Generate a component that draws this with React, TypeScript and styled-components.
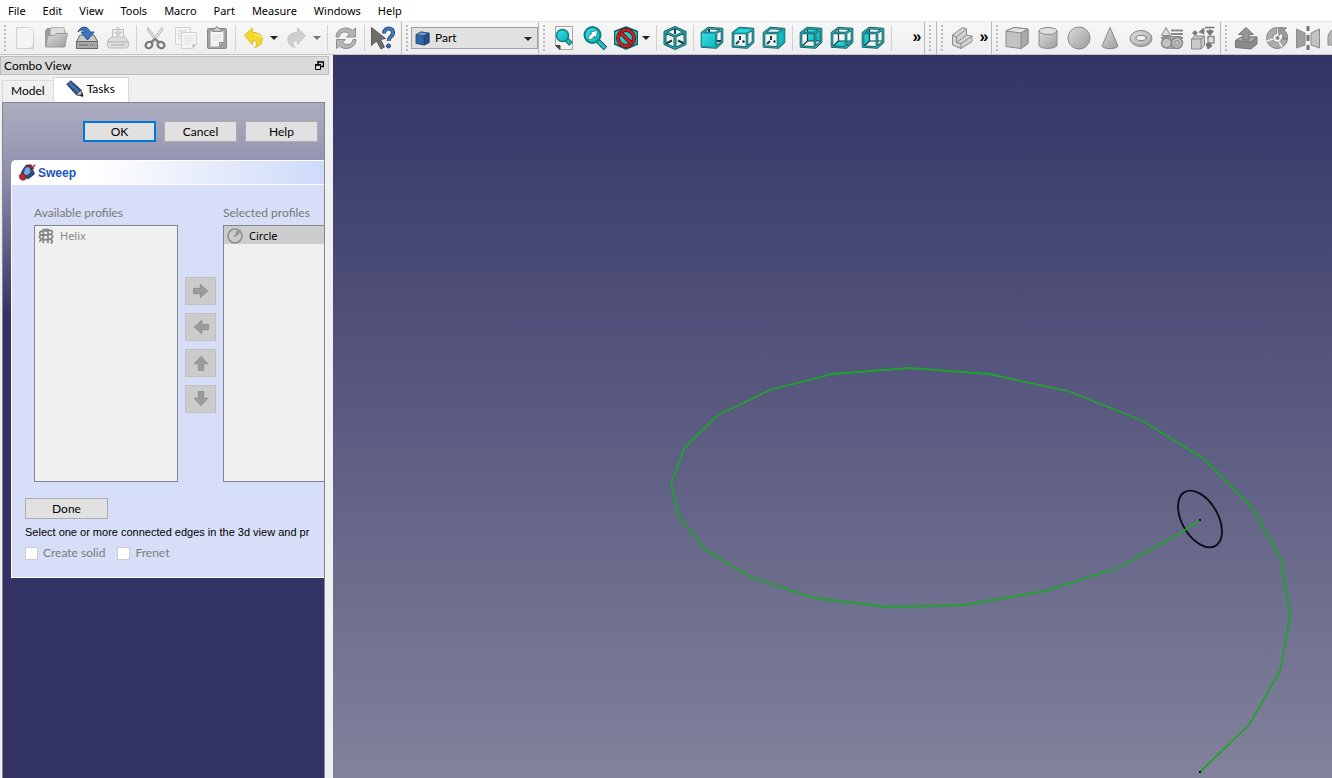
import React from "react";
import styled, { createGlobalStyle, css } from "styled-components";

const Global = createGlobalStyle`
  * { box-sizing: border-box; }
  body { margin: 0; background: #f0f0f0; font: 12px/16px Lato, sans-serif; color: #000; }
  button, select, input { font: inherit; color: inherit; margin: 0; }
`;

const Page = styled.div`
  display: flex;
  flex-direction: column;
  height: 100vh;
  overflow: hidden;
`;

const MenuBar = styled.nav`
  display: flex;
  flex: none;
  gap: 1px;
  height: 21px;
  background: #fff;
`;

const MenuItem = styled.button`
  border: 0;
  padding: 0 8px;
  background: none;
  font-family: "Noto Sans", sans-serif;
  font-size: 11px;
  line-height: 21px;
  white-space: nowrap;
`;

const ToolRow = styled.div`
  display: flex;
  flex: none;
  height: 34px;
  overflow: hidden;
  background: #f0f0f0;
  border-top: 1px solid #e4e4e4;
  border-bottom: 1px solid #c4c4c4;
`;

const ToolGroup = styled.div<{ $end?: number }>`
  display: flex;
  flex: none;
  align-items: center;
  padding-right: ${(p) => p.$end ?? 3}px;
  border-right: 1px solid #b8b8b8;
  background: linear-gradient(#f7f7f7, #eeeeee);
`;

const Handle = styled.span`
  flex: none;
  width: 2px;
  height: 26px;
  margin: 0 3px 0 4px;
  background: repeating-linear-gradient(#bdbdbd 0 2px, transparent 2px 4px);
`;

const ToolButton = styled.button<{ $menu?: boolean }>`
  display: flex;
  flex: none;
  align-items: center;
  gap: 4px;
  width: ${(p) => (p.$menu ? 43 : 31)}px;
  height: 30px;
  padding: 0 0 0 4px;
  border: 0;
  background: none;
`;

const ToolSep = styled.span`
  flex: none;
  width: 1px;
  height: 26px;
  margin: 0 2px 0 3px;
  background: #d0d0d0;
`;

const MoreButton = styled.button`
  flex: none;
  width: 14px;
  padding: 0 0 2px;
  border: 0;
  background: none;
  font: bold 16px/20px "Liberation Sans", sans-serif;
`;

const Spacer = styled.span`
  flex: none;
  width: 16px;
`;

const Combo = styled.label`
  position: relative;
  display: block;
  width: 127px;
  & > svg { position: absolute; top: 4px; pointer-events: none; }
  & > svg:first-child { left: 4px; }
  & > svg:last-child { top: 10px; right: 6px; }
`;

const ComboSelect = styled.select`
  appearance: none;
  display: block;
  width: 100%;
  height: 22px;
  padding: 0 20px 0 23px;
  border: 1px solid #a0a0a0;
  border-radius: 0;
  background: #e1e1e1;
`;

const Main = styled.div`
  display: flex;
  flex: 1;
  min-height: 0;
`;

const Dock = styled.aside`
  display: flex;
  flex: none;
  flex-direction: column;
  width: 333px;
  padding-top: 1px;
`;

const DockTitle = styled.header`
  display: flex;
  align-items: center;
  justify-content: space-between;
  height: 19px;
  width: 329px;
  padding: 0 4px 0 3px;
  border: 1px solid #bcbcbc;
  background: #dadada;
`;

const FloatButton = styled.button`
  display: flex;
  padding: 0;
  border: 0;
  background: none;
`;

const Tabs = styled.div`
  display: flex;
  align-items: flex-end;
  height: 27px;
  padding: 2px 0 0 2px;
`;

const Tab = styled.button<{ $active?: boolean }>`
  display: flex;
  align-items: center;
  gap: 3px;
  border: 1px solid #d9d9d9;
  border-bottom: 0;
  ${(p) =>
    p.$active
      ? css`height: 25px; padding: 0 13px 2px 12px; background: #fff;`
      : css`height: 22px; padding: 0 8px 2px; background: #f0f0f0; border-right: 0;`}
`;

const TaskPanel = styled.section`
  flex: 1;
  min-height: 0;
  margin: 0 8px 0 2px;
  overflow: hidden;
  border: 1px solid #828790;
  border-bottom: 0;
  background: linear-gradient(#acacc0 0, #9292b0 66px, #333366 210px);
`;

const DialogButtons = styled.div`
  display: flex;
  justify-content: flex-end;
  gap: 8px;
  padding: 18px 6px;
`;

const PushButton = styled.button<{ $primary?: boolean; $wide?: boolean }>`
  width: ${(p) => (p.$wide ? 83 : 73)}px;
  height: 21px;
  padding: 0;
  border: ${(p) => (p.$primary ? "2px solid #0078d7" : "1px solid #adadad")};
  background: #e1e1e1;
  line-height: 16px;
`;

const TaskBox = styled.div`
  margin-left: 8px;
  border: 1px solid #fff;
  border-right: 0;
  border-radius: 5px 0 0 0;
  overflow: hidden;
  background: #d6dff7;
`;

const TaskHeader = styled.h2`
  display: flex;
  align-items: center;
  gap: 2px;
  height: 24px;
  margin: 0;
  padding-left: 7px;
  border-bottom: 1px solid #fff;
  background: linear-gradient(90deg, #fff 25%, #cfdaf9);
  color: #1c55b8;
  font-family: "Liberation Sans", sans-serif;
  font-size: 12px;
`;

const Profiles = styled.div`
  display: grid;
  grid-template-columns: 144px 31px 144px;
  gap: 4px 7px;
  padding: 20px 0 16px 22px;
`;

const ProfileLabel = styled.span`
  color: #787878;
  white-space: nowrap;
  &:nth-child(2) { grid-column: 3; }
`;

const ProfileList = styled.ul`
  height: 257px;
  margin: 0;
  padding: 0;
  border: 1px solid #828790;
  background: #f0f0f0;
  list-style: none;
`;

const ProfileItem = styled.li<{ $selected?: boolean }>`
  display: flex;
  align-items: center;
  gap: 6px;
  height: 18px;
  padding: 2px 3px 0;
  background: ${(p) => (p.$selected ? "#cdcdcd" : "none")};
  color: ${(p) => (p.$selected ? "#000" : "#8a8a8a")};
  font-family: "Noto Sans", sans-serif;
  font-size: 11px;
`;

const MoveButtons = styled.div`
  display: flex;
  flex-direction: column;
  gap: 8px;
  padding-top: 52px;
`;

const MoveButton = styled.button`
  display: flex;
  align-items: center;
  justify-content: center;
  height: 28px;
  padding: 0;
  border: 1px solid #bfbfbf;
  background: #cccccc;
`;

const TaskFooter = styled.div`
  display: flex;
  flex-direction: column;
  align-items: flex-start;
  gap: 5px;
  padding: 0 0 16px 13px;
  white-space: nowrap;
`;

const Hint = styled.span`
  font-family: "Liberation Sans", sans-serif;
  font-size: 11px;
`;

const Checks = styled.div`
  display: flex;
  gap: 12px;
`;

const CheckLabel = styled.label`
  display: flex;
  align-items: center;
  gap: 5px;
  color: #7c7c7c;
`;

const CheckBox = styled.input`
  appearance: none;
  width: 13px;
  height: 13px;
  border: 1px solid #ccc;
  background: #fff;
`;

const View3D = styled.main`
  flex: 1;
  min-width: 0;
  background: linear-gradient(#333366, #82829c);
  & > svg { display: block; width: 100%; height: 100%; }
`;

type IconProps = { children: React.ReactNode; size?: number; stroke?: string };
const Icon = ({ children, size = 24, stroke = "#8a8a8a" }: IconProps) => (
  <svg width={size} height={size} viewBox="0 0 24 24" fill="none" stroke={stroke} strokeWidth="1" strokeLinejoin="round" aria-hidden="true">
    {children}
  </svg>
);

const Caret = ({ color = "#222" }: { color?: string }) => (
  <svg width="8" height="4" viewBox="0 0 8 4" aria-hidden="true">
    <path d="M0 0h8L4 4z" fill={color} />
  </svg>
);

const GradientDefs = styled.svg`
  display: block;
`;

const Defs = () => (
  <GradientDefs width="0" height="0" aria-hidden="true">
    <defs>
      <linearGradient id="grey" x1="0" y1="0" x2="1" y2="1">
        <stop offset="0" stopColor="#dcdcdc" />
        <stop offset="1" stopColor="#9c9c9c" />
      </linearGradient>
      <linearGradient id="teal" x1="0" y1="0" x2="1" y2="1">
        <stop offset="0" stopColor="#35e0e2" />
        <stop offset="1" stopColor="#0fb4bc" />
      </linearGradient>
    </defs>
  </GradientDefs>
);

const NewIcon = () => (
  <Icon stroke="#cfcfcf">
    <path d="M3.500 1.500h17v21h-17z" fill="#f4f4f4" />
    <path d="M20.500 16.500v6h-6c4 0 6-2 6-6z" fill="#e4e4e4" />
    <path d="M14 1.500h6.500V7c-1-3-3-5-6.500-5.500z" fill="#fff" stroke="#e2e2e2" />
  </Icon>
);
const OpenIcon = () => (
  <Icon stroke="#9a9a9a">
    <path d="M1.500 20.500V4.500L3 2.500h6l1 2h11v16z" fill="#9b9b9b" />
    <path d="M7 1.500h13l1 8H6z" fill="#dedede" stroke="#b5b5b5" />
    <path d="M1.500 21L4 9.500h6l2-2h11.500l-3 13.500z" fill="url(#grey)" />
  </Icon>
);
const SaveIcon = () => (
  <Icon stroke="#696969">
    <path d="M1.500 15.500L5 9h14l3.500 6.500v7h-21z" fill="#c9c9c9" />
    <path d="M1.500 15.500h21v7h-21z" fill="#a9a9a9" />
    <path d="M4 19h9M15 19h1m1 0h1m1 0h1" stroke="#666" />
    <path d="M3 6C5 0 13-1 15 6h4l-6.500 8L6 6h4C9 4 6 3 3 6z" fill="#3f78bd" stroke="#24508c" />
  </Icon>
);
const PrintIcon = () => (
  <Icon stroke="#bbbbbb">
    <path d="M6.500 3.500h11v9h-11z" fill="#f6f6f6" />
    <path d="M12 1v8M8.500 5.500L12 9.500l3.500-4" strokeWidth="2.500" stroke="#cfcfcf" />
    <path d="M1.500 15.500L5 11h14l3.500 4.500v5l-2 1.500h-17l-2-1.500z" fill="#dedede" />
    <path d="M2 16h20M5 19h14" stroke="#c6c6c6" strokeWidth="2" />
  </Icon>
);
const CutIcon = () => (
  <Icon>
    <path d="M5 1.500L16.500 17l-2 .5L4.500 4z" fill="#e9e9e9" stroke="#b0b0b0" />
    <path d="M19 1.500L7.500 17l2 .5L19.500 4z" fill="#f4f4f4" stroke="#b0b0b0" />
    <ellipse cx="6" cy="19" rx="3.500" ry="3" stroke="#777" strokeWidth="2.200" transform="rotate(-30 6 19)" />
    <ellipse cx="18" cy="19" rx="3.500" ry="3" stroke="#777" strokeWidth="2.200" transform="rotate(30 18 19)" />
    <path d="M8 16l4-3 4 3" stroke="#777" strokeWidth="2" />
  </Icon>
);
const CopyIcon = () => (
  <Icon stroke="#d2d2d2">
    <path d="M1.500 1.500h15v17h-15z" fill="#f4f4f4" />
    <path d="M4 5h9M4 7.500h9M4 10h3M4 12.500h3" />
    <path d="M7.500 6.500h15v12l-4 4h-11z" fill="#f4f4f4" />
    <path d="M10 10h10M10 12.500h10M10 15h10M10 17.500h6" stroke="#dedede" />
    <path d="M18.500 22.500v-4h4z" fill="#bbb" />
  </Icon>
);
const PasteIcon = () => (
  <Icon stroke="#8a8a8a">
    <rect x="2.500" y="2.500" width="19" height="20" rx="1" fill="#a2a2a2" />
    <path d="M5.500 5.500h13v11l-4 4h-9z" fill="#f3f3f3" stroke="#c9c9c9" />
    <path d="M8 9h8M8 11.500h8M8 14h6" stroke="#ddd" />
    <path d="M14.500 20.500v-4h4z" fill="#c0c0c0" />
    <path d="M8 5.500V3h2l1-2h2l1 2h2v2.500z" fill="#d0d0d0" />
  </Icon>
);
const UndoIcon = () => (
  <Icon stroke="#dfbb1e">
    <path d="M2.500 9.500L10.500 2v4.500c7.500 0 10.500 4 9.500 8.500-.6 3.500-3.500 5.500-7 6.500 2.500-3 3.500-6.500-2.500-7v4z" fill="#f4d92c" />
    <path d="M12 8.500c4 0 6.500 1.500 7 4" stroke="#fff39a" />
  </Icon>
);
const RedoIcon = () => (
  <Icon stroke="#c4c4c4">
    <path d="M20.500 9.500L12.500 2v4.500C5 6.500 2 10.500 3 15c.6 3.500 3.500 5.500 7 6.500-2.500-3-3.500-6.500 2.500-7v4z" fill="#cfcfcf" />
  </Icon>
);
const RefreshIcon = () => (
  <Icon stroke="#8f8f8f">
    <path d="M2 11C2 5 7 2 12 2c3 0 5 1 6.500 2.500L21.500 2v9h-9l3-3C12 4.500 6 5.500 5 11z" fill="#b4b4b4" />
    <path d="M22 13.500c0 6-5 9-10 9-3 0-5-1-6.500-2.500L2.500 22.500v-9h9l-3 3c3.500 3.500 9.500 2.500 10.500-3z" fill="#b4b4b4" />
  </Icon>
);
const WhatsThisIcon = () => (
  <Icon>
    <path d="M13 7.500C13 .5 22.500 1 22 7c-.3 3.500-4.500 4-4.500 8" stroke="#23497e" strokeWidth="4" />
    <path d="M13 7.500C13 .5 22.500 1 22 7c-.3 3.500-4.500 4-4.500 8" stroke="#4a80bd" strokeWidth="2" />
    <circle cx="17.500" cy="20" r="2" fill="#3c6eac" stroke="#23497e" />
    <path d="M.5 1.500l14 11-5 1 4 7.500-3.500 2-4.500-8-5 4.500z" fill="#6d6e6a" stroke="#5b5c59" />
  </Icon>
);
const PartIcon = () => (
  <Icon size={15} stroke="#173762">
    <path d="M1.500 6l8-4.500 13 2v15l-8 4-13-2.500z" fill="#3267a8" />
    <path d="M1.500 6l8-4.500 13 2-8 4z" fill="#6d9fd4" />
    <path d="M14.500 7.500l8-4v15l-8 4z" fill="#25508a" />
  </Icon>
);

const FitAllIcon = () => (
  <Icon>
    <path d="M3.500 .5h17v23H8l-4.500-4z" fill="#f4f4f1" stroke="#a9a9a3" />
    <path d="M3.500 19.500L8 23.500v-4z" fill="#444" stroke="#444" />
    <path d="M14 13l5 5" stroke="#0a5b60" strokeWidth="5" />
    <path d="M13 12l5.500 5.500" stroke="#20c4ca" strokeWidth="3" />
    <circle cx="10.500" cy="9.500" r="6" fill="url(#teal)" stroke="#0b7c82" strokeWidth="1.500" />
  </Icon>
);
const FitSelIcon = () => (
  <Icon>
    <path d="M15 15l7.500 7.500" stroke="#0a5b60" strokeWidth="5" />
    <path d="M15 15l7 7" stroke="#20c4ca" strokeWidth="3" />
    <circle cx="9.500" cy="9" r="8" fill="url(#teal)" stroke="#0f7d84" strokeWidth="2" />
    <path d="M4.500 14L6 10l3-2.500-2-1.500 7.500-1.500L13 12l-1.500-2-3 3z" fill="#fff" stroke="#0b5e64" strokeWidth=".6" />
  </Icon>
);
const NoDrawIcon = () => (
  <Icon>
    <path d="M.5 5.500L12 1l11.500 4.500v12.500L12 23 .5 18z" fill="url(#teal)" stroke="#0b5e64" strokeWidth="1.500" />
    <circle cx="12" cy="12" r="8" stroke="#5a0808" strokeWidth="4" />
    <circle cx="12" cy="12" r="8" stroke="#c42424" strokeWidth="2.600" />
    <path d="M6.500 6.500l11 11" stroke="#5a0808" strokeWidth="4" />
    <path d="M6.500 6.500l11 11" stroke="#c42424" strokeWidth="2.600" />
  </Icon>
);
const IsoIcon = () => {
  const d = "M12 1.500l10 4.500v12l-10 4.500L2 18V6zM2 6l10 4.500L22 6M12 10.500v12";
  return (
    <Icon>
      <path d="M12 2v6M2 18l7-3.500M22 18l-7-3.500" stroke="#0b4549" strokeWidth="2" />
      <path d={d} stroke="#0e5a5f" strokeWidth="3" />
      <path d={d} stroke="#2fa9ae" strokeWidth="1.200" />
    </Icon>
  );
};
const faces = {
  front: "M2 7h14v15H2z",
  top: "M2 7l7-5h13l-6 5z",
  right: "M16 7l6-5v14l-6 6z",
  rear: "M8.500 2H22v13H8.500z",
  bottom: "M2 22l6.500-7H22l-6 7z",
  left: "M2 7l6.500-5v13L2 22z",
};
const ViewIcon = ({ face }: { face: keyof typeof faces }) => {
  const back = face === "rear" || face === "bottom" || face === "left";
  const frame = "M2 7h14v14.500L2 20.500zM2 7l6.500-5L22 3v13l-6 5.500M16 7l6-4";
  const hidden = back ? "M8.500 2v13H22M8.500 15L2 21" : face === "front" ? "M9 3v4M16 15h5" : "M9 10v4M5 18l3-3M11.500 15l2 1";
  return (
    <Icon>
      {back && <path d={faces[face]} fill="url(#teal)" stroke="none" />}
      <path d={hidden} stroke="#0b4549" strokeWidth={back ? 1.2 : 2} />
      {!back && <path d={faces[face]} fill="url(#teal)" stroke="none" />}
      <path d={frame} stroke="#0e5a5f" strokeWidth="2.600" />
      <path d={frame} stroke="#2fa9ae" strokeWidth="1.200" />
      {face === "front" && <path d="M1.500 7h14v14.500l-14-1z" fill="url(#teal)" stroke="#139097" />}
      {face === "top" && <path d="M2 7l7-5 13 1-6 4z" fill="#2bd6da" stroke="#139097" />}
      {face === "right" && <path d="M16 7.500l6-4v12.500l-6 5z" fill="#14bac2" stroke="#139097" />}
    </Icon>
  );
};

const StepsIcon = () => (
  <Icon>
    <path d="M2.500 9l10-7.500 4 1.500v6l5.500 1v5.500L11 22.500l-8.500-3.500z" fill="#d2d2d2" />
    <path d="M2.500 9l4 2v5.500l4.500 1v5M6.500 11l10-8M6.500 16.500l10-7.500M11 17.500l11-7.500" />
  </Icon>
);
const BoxIcon = () => (
  <Icon>
    <path d="M1 5l8-3.500 14 1.500v14.500l-7 5L1 20.500z" fill="#c2c2c2" />
    <path d="M1 5l8-3.500L23 3l-7 4z" fill="#e2e2e2" />
    <path d="M16 7l7-4v14.500l-7 5z" fill="#a9a9a9" />
  </Icon>
);
const CylinderIcon = () => (
  <Icon>
    <path d="M3 5v14c0 4.500 18 4.500 18 0V5z" fill="url(#grey)" />
    <ellipse cx="12" cy="5" rx="9" ry="3.500" fill="#dedede" />
  </Icon>
);
const SphereIcon = () => (
  <Icon>
    <circle cx="12" cy="12" r="11" fill="url(#grey)" />
  </Icon>
);
const ConeIcon = () => (
  <Icon>
    <path d="M12 1.500L4 20c1 3.500 15 3.500 16 0z" fill="url(#grey)" />
  </Icon>
);
const TorusIcon = () => (
  <Icon>
    <ellipse cx="12" cy="12.500" rx="11" ry="8" fill="url(#grey)" />
    <ellipse cx="12" cy="12" rx="5" ry="2.500" fill="#f0f0f0" />
    <ellipse cx="12" cy="12" rx="8" ry="5" stroke="#d8d8d8" />
  </Icon>
);
const PrimitivesIcon = () => (
  <Icon>
    <path d="M6 1.500L1.500 9.500h9z" fill="#ddd" />
    <path d="M11 4.500h12M11 8h12M1 12h22" strokeWidth="2" />
    <path d="M3 10.500h18v10c-3 2.500-15 2.500-18 0z" fill="#ababab" />
    <circle cx="6.500" cy="17" r="5" fill="#c2c2c2" strokeWidth="1.500" />
    <circle cx="17" cy="17" r="5.500" fill="#c2c2c2" strokeWidth="1.500" />
    <circle cx="17" cy="17" r="2.500" />
  </Icon>
);
const BuilderIcon = () => (
  <Icon>
    <path d="M.5 13l3-3h10v9l-3.500 4H.5z" fill="#c9c9c9" />
    <path d="M.5 13H10v10M10 13l3.500-3" />
    <path d="M4 4.500L6.500 7 4 9.500 1.500 7zM8 6l5-4v6z" fill="#777" />
    <path d="M14 1.500h9.500M19 3v5M16 5l3 4 3-4z" fill="#777" stroke="#777" strokeWidth="1.500" />
    <path d="M17 10.500h6V17h-6z" fill="#ddd" strokeWidth="1.500" />
    <path d="M15 18l4-1 2 3-4 3z" fill="#777" stroke="#777" />
  </Icon>
);
const ExtrudeIcon = () => (
  <Icon stroke="#777">
    <path d="M1.500 14.500l6-3.500h15.500v7l-6 5-15.500-1.500z" fill="#8a8a8a" />
    <path d="M1.500 14.500l6-3.500h15.500l-6 5z" fill="#ababab" />
    <path d="M9 14V8.500H4.500L12 1.500l7.500 7H15V14z" fill="#979797" />
  </Icon>
);
const RevolveIcon = () => (
  <Icon stroke="#858585">
    <path d="M12 1.500a10.500 10.500 0 1 0 10.500 12l-6-.5a4.500 4.500 0 1 1-5-5.500z" fill="#ababab" />
    <path d="M22.500 13c.5-4-1-7-3.500-9l2.500-2-8-.5.500 8 2-2.500c1.500 1.500 2 3.500 1.500 5.500z" fill="#999" />
    <path d="M2 15l6-2M14 16l3 5" stroke="#eee" strokeWidth="1.500" />
    <circle cx="12.500" cy="12" r="1.500" fill="#888" />
  </Icon>
);
const MirrorIcon = () => (
  <Icon stroke="#8a8a8a">
    <path d="M.5 3l8.500 4v12l-8.500 3z" fill="#a0a0a0" />
    <path d="M23.500 3L15 7v12l8.500 3z" fill="#c2c2c2" />
    <path d="M12 0v5M12 9v6M12 19v5" strokeWidth="3" stroke="#777" />
  </Icon>
);
const FilletIcon = () => (
  <Icon>
    <path d="M1 19V12C1 6 6 2 12 2h11v17z" fill="#b5b5b5" />
    <path d="M7 19v-5c0-4 3-7 8-7h8" />
  </Icon>
);

const PencilIcon = () => (
  <Icon size={18} stroke="#14294a">
    <path d="M1 5.500L6.500 1 20 13l2.500 8.500-9-2z" fill="#30578f" />
    <path d="M4 3.500l13.500 13" stroke="#5479b0" strokeWidth="2" />
    <path d="M13.500 19.500l6.500-6 2.500 8z" fill="#b9bbbd" stroke="#444" />
    <path d="M19 20.500l2.500-2.500 1 3.500z" fill="#222" />
  </Icon>
);
const SweepIcon = () => (
  <Icon size={17} stroke="#4b1116">
    <path d="M3 12l5-8 9-2 5 12-9 7-6-3z" fill="#2c4d85" stroke="#1b3358" />
    <path d="M9 5l6-1 2 8-7 5-4-4z" fill="#7aa7da" stroke="#274a7c" />
    <path d="M1 15l4-2 5 4-1 5-5 1-3-3z" fill="#c9252c" />
    <path d="M9 2l8-1 4 5-3 1-3-4z" fill="#b5252c" />
    <path d="M20 1h3v3h-3z" fill="#d93238" stroke="none" />
  </Icon>
);
const HelixIcon = () => (
  <Icon size={16} stroke="#858585">
    <path d="M10 2h6M15 1v22M8 1v22M15 4c8-2 9 5 1 6M15 10c9-2 9 6 1 7M15 17c7-1 8 4 4 6M15 5C7 2 1 6 3 9c2 2 7 2 12 1M15 11C6 8 0 12 3 15c2 2 7 3 12 2M14 18c-6-2-12-1-11 3" strokeWidth="2.600" />
  </Icon>
);
const CircleIcon = () => (
  <Icon size={16} stroke="#909090">
    <circle cx="12" cy="12" r="10.500" strokeWidth="2.500" />
    <path d="M11 13l5-5" strokeWidth="3" />
    <path d="M13 6l7-3-3 7z" fill="#909090" />
  </Icon>
);
const MoveIcon = ({ angle }: { angle: number }) => (
  <Icon size={18} stroke="#858585">
    <path d="M2 8.500h9V3l10 9-10 9v-5.500H2z" fill="#9c9c9c" transform={`rotate(${angle} 12 12)`} />
  </Icon>
);
const FloatIcon = () => (
  <svg width="9" height="9" viewBox="0 0 9 9" fill="none" stroke="#000" aria-hidden="true">
    <path d="M3 .5V1h5.500v4.500H6M3 0v3M0 4h6" strokeWidth="1.500" />
    <path d="M.5 3.500h5v5h-5z" />
  </svg>
);

const menus = ["File", "Edit", "View", "Tools", "Macro", "Part", "Measure", "Windows", "Help"];

type ToolProps = { label: string; menu?: string; children: React.ReactNode };
const Tool = ({ label, menu, children }: ToolProps) => (
  <ToolButton type="button" title={label} aria-label={label} $menu={!!menu}>
    {children}
    {menu && <Caret color={menu} />}
  </ToolButton>
);

const Toolbars = () => (
  <ToolRow>
    <ToolGroup>
      <Handle />
      <Tool label="New"><NewIcon /></Tool>
      <Tool label="Open"><OpenIcon /></Tool>
      <Tool label="Save"><SaveIcon /></Tool>
      <Tool label="Print"><PrintIcon /></Tool>
      <ToolSep />
      <Tool label="Cut"><CutIcon /></Tool>
      <Tool label="Copy"><CopyIcon /></Tool>
      <Tool label="Paste"><PasteIcon /></Tool>
      <ToolSep />
      <Tool label="Undo" menu="#222"><UndoIcon /></Tool>
      <Tool label="Redo" menu="#777"><RedoIcon /></Tool>
      <ToolSep />
      <Tool label="Refresh"><RefreshIcon /></Tool>
      <ToolSep />
      <Tool label="What's this"><WhatsThisIcon /></Tool>
    </ToolGroup>
    <ToolGroup $end={0}>
      <Handle />
      <Combo>
        <PartIcon />
        <ComboSelect aria-label="Workbench" defaultValue="Part">
          <option>Part</option>
        </ComboSelect>
        <Caret />
      </Combo>
    </ToolGroup>
    <ToolGroup $end={0}>
      <Handle />
      <Tool label="Fit all"><FitAllIcon /></Tool>
      <Tool label="Fit selection"><FitSelIcon /></Tool>
      <Tool label="Draw style" menu="#222"><NoDrawIcon /></Tool>
      <ToolSep />
      <Tool label="Isometric"><IsoIcon /></Tool>
      <ToolSep />
      <Tool label="Front"><ViewIcon face="front" /></Tool>
      <Tool label="Top"><ViewIcon face="top" /></Tool>
      <Tool label="Right"><ViewIcon face="right" /></Tool>
      <ToolSep />
      <Tool label="Rear"><ViewIcon face="rear" /></Tool>
      <Tool label="Bottom"><ViewIcon face="bottom" /></Tool>
      <Tool label="Left"><ViewIcon face="left" /></Tool>
      <ToolSep />
      <Spacer />
      <MoreButton type="button" aria-label="More views">»</MoreButton>
    </ToolGroup>
    <ToolGroup $end={2}>
      <Handle />
    </ToolGroup>
    <ToolGroup $end={0}>
      <Handle />
      <Tool label="Create part"><StepsIcon /></Tool>
      <MoreButton type="button" aria-label="More structure tools">»</MoreButton>
    </ToolGroup>
    <ToolGroup $end={2}>
      <Handle />
      <Tool label="Box"><BoxIcon /></Tool>
      <Tool label="Cylinder"><CylinderIcon /></Tool>
      <Tool label="Sphere"><SphereIcon /></Tool>
      <Tool label="Cone"><ConeIcon /></Tool>
      <Tool label="Torus"><TorusIcon /></Tool>
      <Tool label="Primitives"><PrimitivesIcon /></Tool>
      <Tool label="Shape builder"><BuilderIcon /></Tool>
    </ToolGroup>
    <ToolGroup>
      <Handle />
      <Tool label="Extrude"><ExtrudeIcon /></Tool>
      <Tool label="Revolve"><RevolveIcon /></Tool>
      <Tool label="Mirror"><MirrorIcon /></Tool>
      <Tool label="Fillet"><FilletIcon /></Tool>
    </ToolGroup>
  </ToolRow>
);

const moves = [
  { label: "Add", angle: 0 },
  { label: "Remove", angle: 180 },
  { label: "Move up", angle: -90 },
  { label: "Move down", angle: 90 },
];

const SweepTask = () => (
  <TaskBox>
    <TaskHeader><SweepIcon />Sweep</TaskHeader>
    <Profiles>
      <ProfileLabel id="available">Available profiles</ProfileLabel>
      <ProfileLabel id="selected">Selected profiles</ProfileLabel>
      <ProfileList aria-labelledby="available">
        <ProfileItem><HelixIcon />Helix</ProfileItem>
      </ProfileList>
      <MoveButtons>
        {moves.map((m) => (
          <MoveButton key={m.label} type="button" aria-label={m.label}>
            <MoveIcon angle={m.angle} />
          </MoveButton>
        ))}
      </MoveButtons>
      <ProfileList aria-labelledby="selected">
        <ProfileItem $selected><CircleIcon />Circle</ProfileItem>
      </ProfileList>
    </Profiles>
    <TaskFooter>
      <PushButton type="button" $wide>Done</PushButton>
      <Hint>Select one or more connected edges in the 3d view and pr</Hint>
      <Checks>
        <CheckLabel><CheckBox type="checkbox" />Create solid</CheckLabel>
        <CheckLabel><CheckBox type="checkbox" />Frenet</CheckLabel>
      </Checks>
    </TaskFooter>
  </TaskBox>
);

const helix =
  "867,465 849,477 787,512 712,536 632,550 554,552 482,543 417,522 373,495 346,462 338,428 352,392 385,360 437,335 500,319 577,313 656,319 735,336 810,366 871,404 919,452 948,504 957,561 947,616 916,670 867,717";

export default function App() {
  return (
    <Page>
      <Global />
      <Defs />
      <MenuBar>
        {menus.map((m) => (
          <MenuItem key={m} type="button">{m}</MenuItem>
        ))}
      </MenuBar>
      <Toolbars />
      <Main>
        <Dock>
          <DockTitle>
            <span>Combo View</span>
            <FloatButton type="button" aria-label="Float panel"><FloatIcon /></FloatButton>
          </DockTitle>
          <Tabs role="tablist">
            <Tab type="button" role="tab">Model</Tab>
            <Tab type="button" role="tab" aria-selected="true" $active><PencilIcon />Tasks</Tab>
          </Tabs>
          <TaskPanel>
            <DialogButtons>
              <PushButton type="button" $primary>OK</PushButton>
              <PushButton type="button">Cancel</PushButton>
              <PushButton type="button">Help</PushButton>
            </DialogButtons>
            <SweepTask />
          </TaskPanel>
        </Dock>
        <View3D>
          <svg viewBox="0 0 999 723" preserveAspectRatio="xMidYMid meet" fill="none" role="img" aria-label="Helix path with a circle profile">
            <ellipse cx="867" cy="464" rx="31" ry="18" transform="rotate(60 867 464)" stroke="#0c0c14" strokeWidth="1.800" />
            <polyline points={helix} stroke="#1fa32b" strokeWidth="1.800" />
            <path d="M866 464h2v2h-2zM866 716h2v2h-2z" fill="#0c0c14" />
          </svg>
        </View3D>
      </Main>
    </Page>
  );
}
